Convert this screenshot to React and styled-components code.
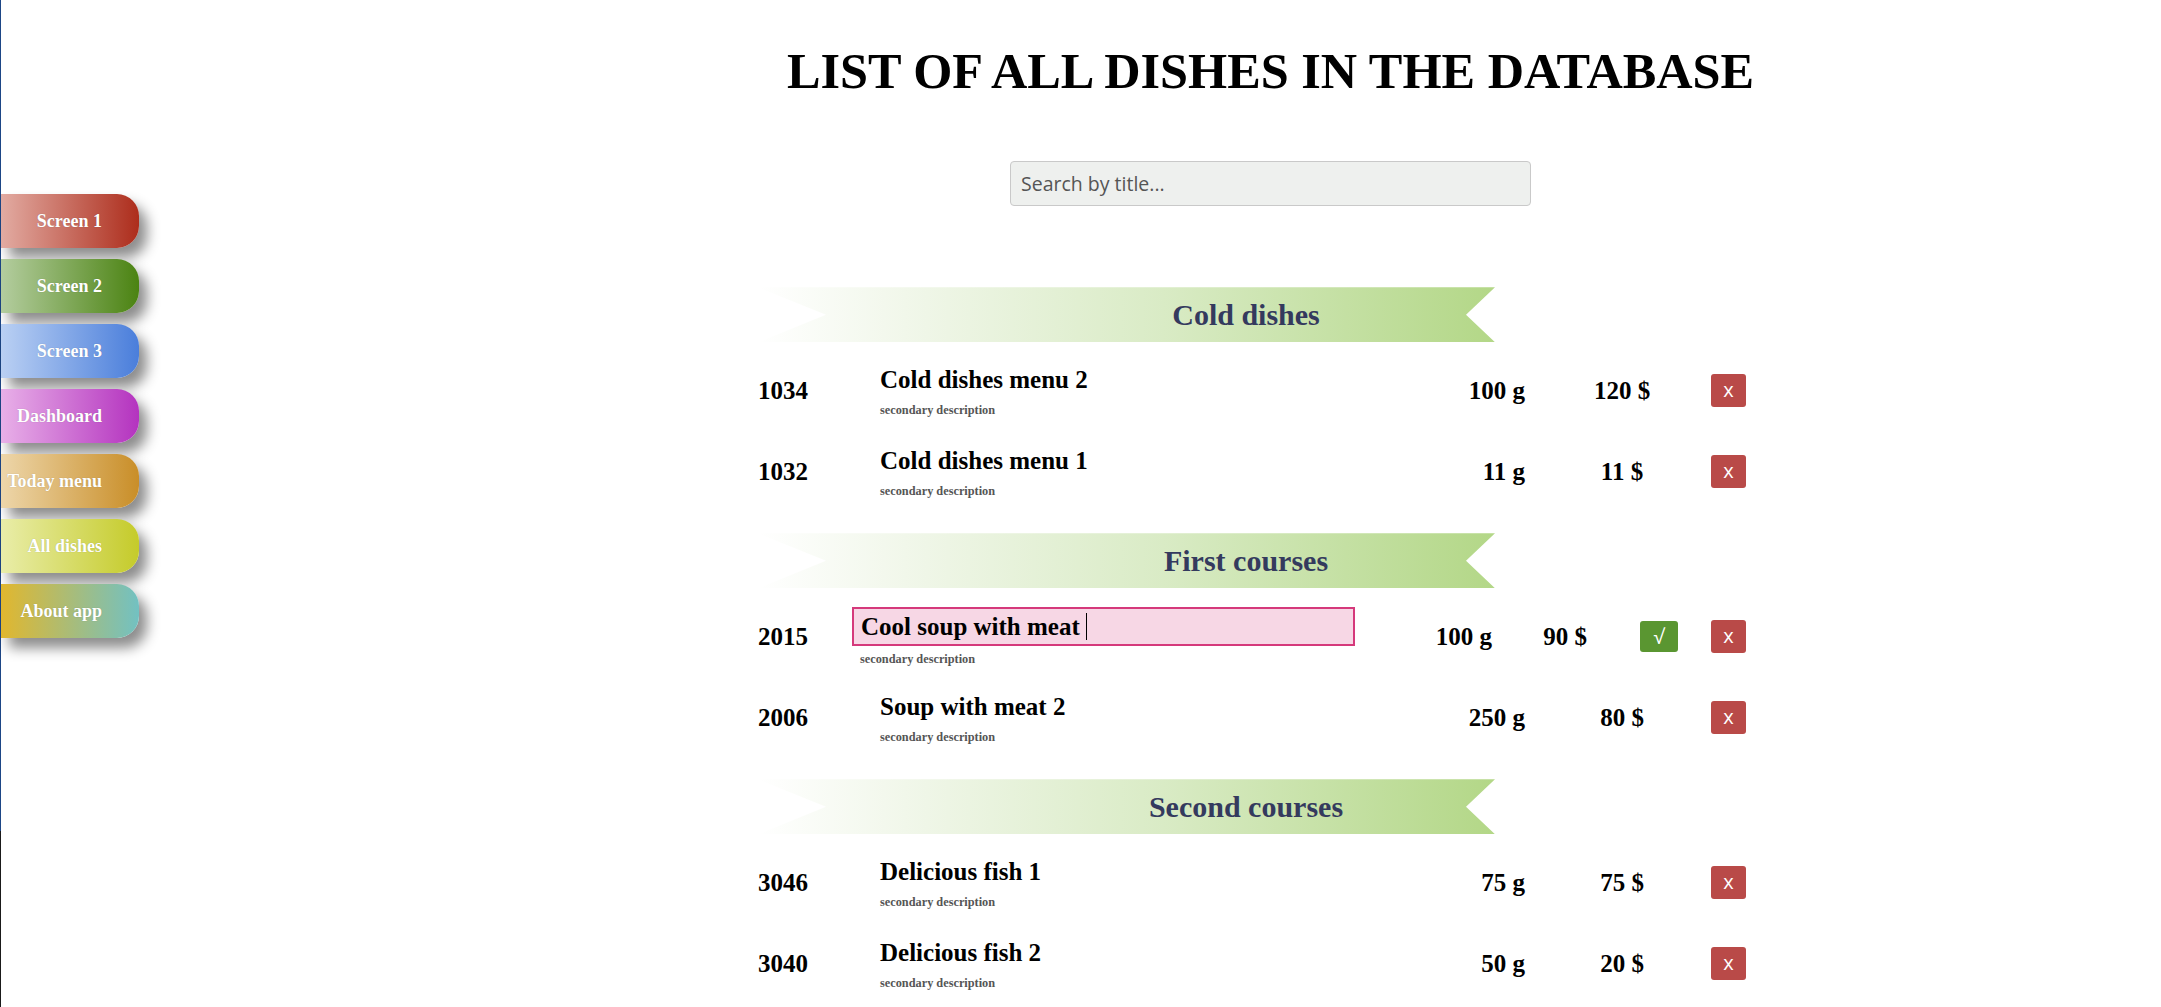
import React from "react";
import styled, { createGlobalStyle } from "styled-components";

const navItems = [
  { label: "Screen 1", from: "#e2aba2", to: "#ad2d1c" },
  { label: "Screen 2", from: "#b4cd9f", to: "#4b8312" },
  { label: "Screen 3", from: "#bad0f3", to: "#4a7edb" },
  { label: "Dashboard", from: "#e8b0e8", to: "#b433bf" },
  { label: "Today menu", from: "#edd6aa", to: "#c98e28" },
  { label: "All dishes", from: "#e9eda9", to: "#c5cb2a" },
  { label: "About app", from: "#e1b72e", to: "#72c1c2" },
];

const sections = [
  {
    title: "Cold dishes",
    dishes: [
      { id: 1034, title: "Cold dishes menu 2", weight: "100 g", price: "120 $" },
      { id: 1032, title: "Cold dishes menu 1", weight: "11 g", price: "11 $" },
    ],
  },
  {
    title: "First courses",
    dishes: [
      { id: 2015, title: "Cool soup with meat", weight: "100 g", price: "90 $", editing: true },
      { id: 2006, title: "Soup with meat 2", weight: "250 g", price: "80 $" },
    ],
  },
  {
    title: "Second courses",
    dishes: [
      { id: 3046, title: "Delicious fish 1", weight: "75 g", price: "75 $" },
      { id: 3040, title: "Delicious fish 2", weight: "50 g", price: "20 $" },
    ],
  },
];

const App = () => {
  return (
    <Page>
      <GlobalStyle />
      <Nav>
        {navItems.map((item) => (
          <NavButton key={item.label} $from={item.from} $to={item.to}>
            {item.label}
          </NavButton>
        ))}
      </Nav>
      <Main>
        <Title>LIST OF ALL DISHES IN THE DATABASE</Title>
        <Search type="text" placeholder="Search by title..." />
        <List>
          {sections.map((section) => (
            <Section key={section.title}>
              <Banner>{section.title}</Banner>
              {section.dishes.map((dish) => (
                <Row key={dish.id} $editing={dish.editing}>
                  <Cell>{dish.id}</Cell>
                  <TitleBlock>
                    {dish.editing ? (
                      <EditBox>
                        {dish.title}
                        <Caret />
                      </EditBox>
                    ) : (
                      <DishTitle>{dish.title}</DishTitle>
                    )}
                    <Desc $editing={dish.editing}>secondary description</Desc>
                  </TitleBlock>
                  <Cell $align="right">{dish.weight}</Cell>
                  <Cell $align={dish.editing ? "right" : "center"}>{dish.price}</Cell>
                  {dish.editing && <ConfirmButton>√</ConfirmButton>}
                  <DeleteButton>x</DeleteButton>
                </Row>
              ))}
            </Section>
          ))}
        </List>
      </Main>
    </Page>
  );
};

//styled components
const GlobalStyle = createGlobalStyle`
  html, body {
    margin: 0;
    padding: 0;
    background: #fff;
  }
  body {
    font-family: "Liberation Serif", "Times New Roman", serif;
    color: #000;
  }
`;

const Page = styled.div`
  display: flex;
  min-height: 1007px;
  box-sizing: border-box;
  border-left: 1px solid;
  border-image: linear-gradient(to bottom, #1d4686 81%, #1a1a1a 81%) 1;
`;

const Nav = styled.nav`
  width: 379px;
  flex-shrink: 0;
  padding-top: 194px;
  display: flex;
  flex-direction: column;
  align-items: flex-start;
  gap: 11px;
`;

const NavButton = styled.div`
  width: 138px;
  height: 54px;
  box-sizing: border-box;
  padding-right: 37px;
  display: flex;
  align-items: center;
  justify-content: flex-end;
  color: #fff;
  font-size: 18px;
  font-weight: bold;
  white-space: nowrap;
  text-shadow: 0 0 1px rgba(0, 0, 0, 0.25);
  border-radius: 0 22px 22px 0;
  background: linear-gradient(to right, ${(p) => p.$from}, ${(p) => p.$to});
  box-shadow: 8px 10px 13px rgba(0, 0, 0, 0.45);
  cursor: pointer;
`;

const Main = styled.main`
  flex: 1;
  display: flex;
  flex-direction: column;
  align-items: center;
`;

const Title = styled.h1`
  margin: 44px 0 0;
  font-size: 50.3px;
  line-height: 1.1;
  font-weight: bold;
`;

const Search = styled.input`
  margin-top: 62px;
  width: 521px;
  height: 45px;
  box-sizing: border-box;
  border: 1px solid #c9c9c9;
  border-radius: 4px;
  background: #eef0ee;
  padding: 0 10px;
  font-family: "Open Sans", "DejaVu Sans", sans-serif;
  font-size: 19.5px;
  outline: none;
  &::placeholder {
    color: #555;
  }
`;

const List = styled.div`
  margin-top: 81px;
  width: 1025px;
  padding-right: 37px;
  box-sizing: border-box;
`;

const Section = styled.section`
  margin-bottom: 21px;
`;

const Banner = styled.h2`
  margin: 0 0 8px;
  width: 737px;
  height: 55px;
  box-sizing: border-box;
  padding-left: 239px;
  display: flex;
  align-items: center;
  justify-content: center;
  font-size: 30px;
  font-weight: bold;
  color: #343a5e;
  background: linear-gradient(to right, #ffffff 0%, #f1f7ea 20%, #d9ebc5 55%, #b3d787 100%);
  clip-path: polygon(0 0, 100% 0, calc(100% - 29px) 50%, 100% 100%, 0 100%, 68px 50%);
`;

const Row = styled.div`
  display: grid;
  grid-template-columns: ${(p) =>
    p.$editing ? "94px 503px 137px 95px 91px 68px" : "122px 1fr 95px 186px 35px"};
  align-items: center;
  height: 81px;
`;

const Cell = styled.div`
  font-size: 25px;
  font-weight: bold;
  text-align: ${(p) => p.$align || "left"};
  padding-left: ${(p) => (p.$align === "center" ? "8px" : "0")};
`;

const TitleBlock = styled.div`
  display: flex;
  flex-direction: column;
  align-items: flex-start;
`;

const DishTitle = styled.div`
  font-size: 25px;
  font-weight: bold;
  line-height: 29px;
`;

const EditBox = styled.div`
  width: 503px;
  height: 39px;
  box-sizing: border-box;
  border: 2px solid #d5397b;
  background: #f7d7e5;
  padding: 0 7px;
  display: flex;
  align-items: center;
  font-size: 25px;
  font-weight: bold;
`;

const Caret = styled.span`
  display: inline-block;
  width: 1px;
  height: 27px;
  margin-left: 6px;
  background: #000;
`;

const Desc = styled.div`
  margin-top: ${(p) => (p.$editing ? "6px" : "9px")};
  padding-left: ${(p) => (p.$editing ? "8px" : "0")};
  font-size: 12.3px;
  line-height: 14px;
  font-weight: bold;
  color: #555;
`;

const ActionButton = styled.button`
  justify-self: end;
  border: none;
  border-radius: 3px;
  color: #fff;
  font-family: "Open Sans", "DejaVu Sans", sans-serif;
  font-size: 20px;
  display: flex;
  align-items: center;
  justify-content: center;
  padding: 0 0 3px;
  cursor: pointer;
`;

const DeleteButton = styled(ActionButton)`
  width: 35px;
  height: 33px;
  background: #b94a48;
`;

const ConfirmButton = styled(ActionButton)`
  width: 38px;
  height: 31px;
  background: #5a9631;
  padding: 0;
`;

export default App;
